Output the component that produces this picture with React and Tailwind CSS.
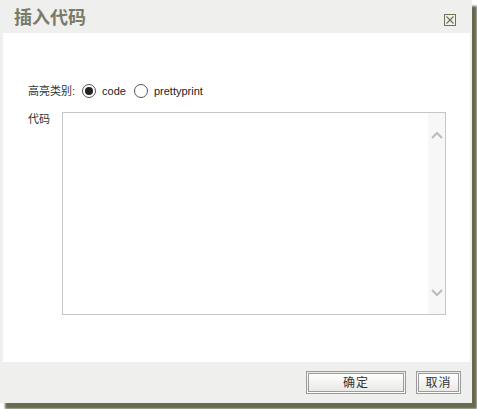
import React from 'react'

// dialog chrome colours
const CJK = "font-['Liberation_Sans','Noto_Sans_CJK_SC',sans-serif]"

function Radio({ checked }) {
  return (
    <span className="w-[14px] h-[14px] rounded-full border border-[#555] bg-white flex items-center justify-center shrink-0">
      {checked && <span className="w-[8px] h-[8px] rounded-full bg-[#222]" />}
    </span>
  )
}

function Btn({ w, children }) {
  return (
    <button className={`${w} h-[23px] border-[3px] border-double border-[#9c9c9c] bg-gradient-to-b from-white to-[#e9e9e6] text-[12px] text-[#333] flex items-center justify-center tracking-[1px]`}>
      {children}
    </button>
  )
}

export default function App() {
  return (
    <div className={`w-[477px] h-[409px] bg-white ${CJK}`}>
      <div className="w-[472px] h-[403px] bg-[#efefed] flex flex-col shadow-[5px_6px_2px_rgba(80,80,50,0.85)]">
        {/* Title bar */}
        <div className="h-[33px] flex items-center justify-between pl-[14px] pr-[16px]">
          <div className="text-[18px] font-bold text-[#7a7a68] font-['Noto_Sans_CJK_SC',sans-serif] leading-none -mt-[1px]">插入代码</div>
          <svg width="12" height="12" viewBox="0 0 12 12" className="mt-[6px]">
            <rect x="0.5" y="0.5" width="11" height="11" fill="none" stroke="#6f6f58" />
            <path d="M2.5 2.5 L9.5 9.5 M9.5 2.5 L2.5 9.5" stroke="#6f6f58" strokeWidth="1.1" />
          </svg>
        </div>

        {/* Body */}
        <div className="ml-[3px] mr-[2px] h-[329px] bg-white pl-[25px] pt-[50px]">
          <div className="flex items-center h-[16px] text-[11px] text-[#222]">
            <span className="text-[#333]">高亮类别:</span>
            <span className="ml-[7px]"><Radio checked /></span>
            <span className="ml-[6px]">code</span>
            <span className="ml-[8px]"><Radio /></span>
            <span className="ml-[6px]">prettyprint</span>
          </div>
          <div className="flex mt-[13px]">
            <span className="w-[34px] text-[11px] text-[#333] -mt-[1px]">代码</span>
            <div className="w-[384px] h-[203px] border border-[#c6c6c6] flex justify-end">
              <div className="w-[17px] h-full bg-[#f7f7f7] flex flex-col items-center justify-between pt-[18px] pb-[17px]">
                <svg width="12" height="8" viewBox="0 0 12 8">
                  <path d="M1 7 L6 2 L11 7" fill="none" stroke="#bcbcbc" strokeWidth="2" />
                </svg>
                <svg width="12" height="8" viewBox="0 0 12 8">
                  <path d="M1 1 L6 6 L11 1" fill="none" stroke="#bcbcbc" strokeWidth="2" />
                </svg>
              </div>
            </div>
          </div>
        </div>

        {/* Footer */}
        <div className="flex-1 flex items-start justify-end gap-[10px] pt-[9px] pr-[11px]">
          <Btn w="w-[100px]">确定</Btn>
          <Btn w="w-[45px]">取消</Btn>
        </div>
      </div>
    </div>
  )
}
